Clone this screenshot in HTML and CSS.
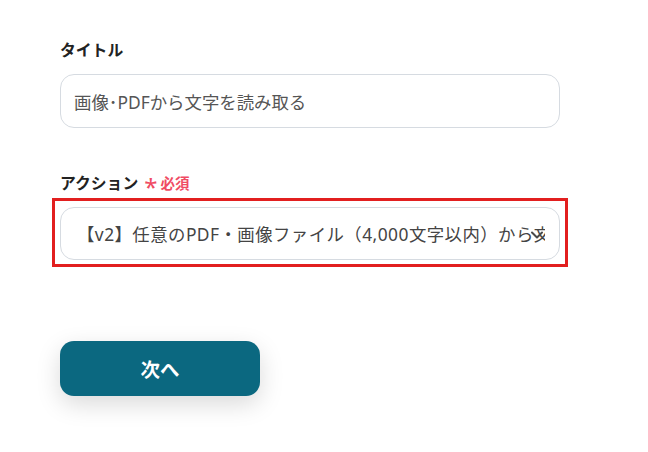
FILE: index.html
```html
<!DOCTYPE html>
<html lang="ja">
<head>
<meta charset="utf-8">
<link rel="stylesheet" href="styles.css">
</head>
<body>
<div class="page">
  <div class="field">
    <div class="label">タイトル</div>
    <div class="input">画像･PDFから文字を読み取る</div>
  </div>
  <div class="field field-action">
    <div class="label">アクション<span class="req"><span class="ast">*</span>必須</span></div>
    <div class="highlight">
      <div class="input select">
        <span class="select-text">【v2】任意のPDF・画像ファイル（4,000文字以内）から文字情報を読み取る</span>
        <svg class="chev" width="14" height="10" viewBox="0 0 14 10"><path d="M2 2.5 L7 7.5 L12 2.5" fill="none" stroke="#4a4a4a" stroke-width="2" stroke-linecap="round" stroke-linejoin="round"/></svg>
      </div>
    </div>
  </div>
  <button class="btn">次へ</button>
</div>
</body>
</html>
```
FILE: styles.css
```css
* { box-sizing: border-box; }
html, body { margin: 0; background: #fff; }
body {
  font-family: "Noto Sans", "Noto Sans CJK JP", sans-serif;
  color: #222;
  min-height: 452px;
}
.page {
  padding: 39px 0 0 60px;
  width: 600px;
}
.label {
  font-size: 15.8px;
  line-height: 22px;
  font-weight: 700;
  color: #222;
  margin-bottom: 13px;
  display: flex;
  align-items: center;
}
.req {
  display: inline-flex;
  align-items: center;
  margin-left: 6px;
  font-size: 14.5px;
  font-weight: 700;
  color: #f04b63;
}
.ast {
  font-size: 24px;
  font-weight: 400;
  line-height: 14px;
  margin-right: 3px;
  position: relative;
  top: 4px;
}
.input {
  width: 500px;
  height: 54px;
  border: 1px solid #d6dbe1;
  border-radius: 14px;
  padding: 0 13px;
  display: flex;
  align-items: center;
  font-size: 17.4px;
  color: #555;
  background: #fff;
}
.field-action { margin-top: 44px; }
.field-action .label { margin-bottom: 4px; }
.highlight {
  margin-left: -8px;
  width: 516px;
  border: 3px solid #e21f1f;
  padding: 6px 5px 4px 5px;
}
.select {
  position: relative;
  padding: 0 14px 0 16px;
  height: 53px;
}
.select-text {
  display: block;
  white-space: nowrap;
  overflow: hidden;
  letter-spacing: 0.45px;
  color: #444;
}
.chev {
  position: absolute;
  right: 15px;
  top: 22px;
  z-index: 1;
}
.btn {
  margin-top: 74px;
  width: 200px;
  height: 55px;
  border: none;
  border-radius: 14px;
  background: #0b6880;
  color: #fff;
  font-family: "Noto Sans", "Noto Sans CJK JP", sans-serif;
  font-size: 19.5px;
  font-weight: 700;
  box-shadow: 0 8px 24px rgba(0, 0, 0, 0.15);
  display: block;
}
```
